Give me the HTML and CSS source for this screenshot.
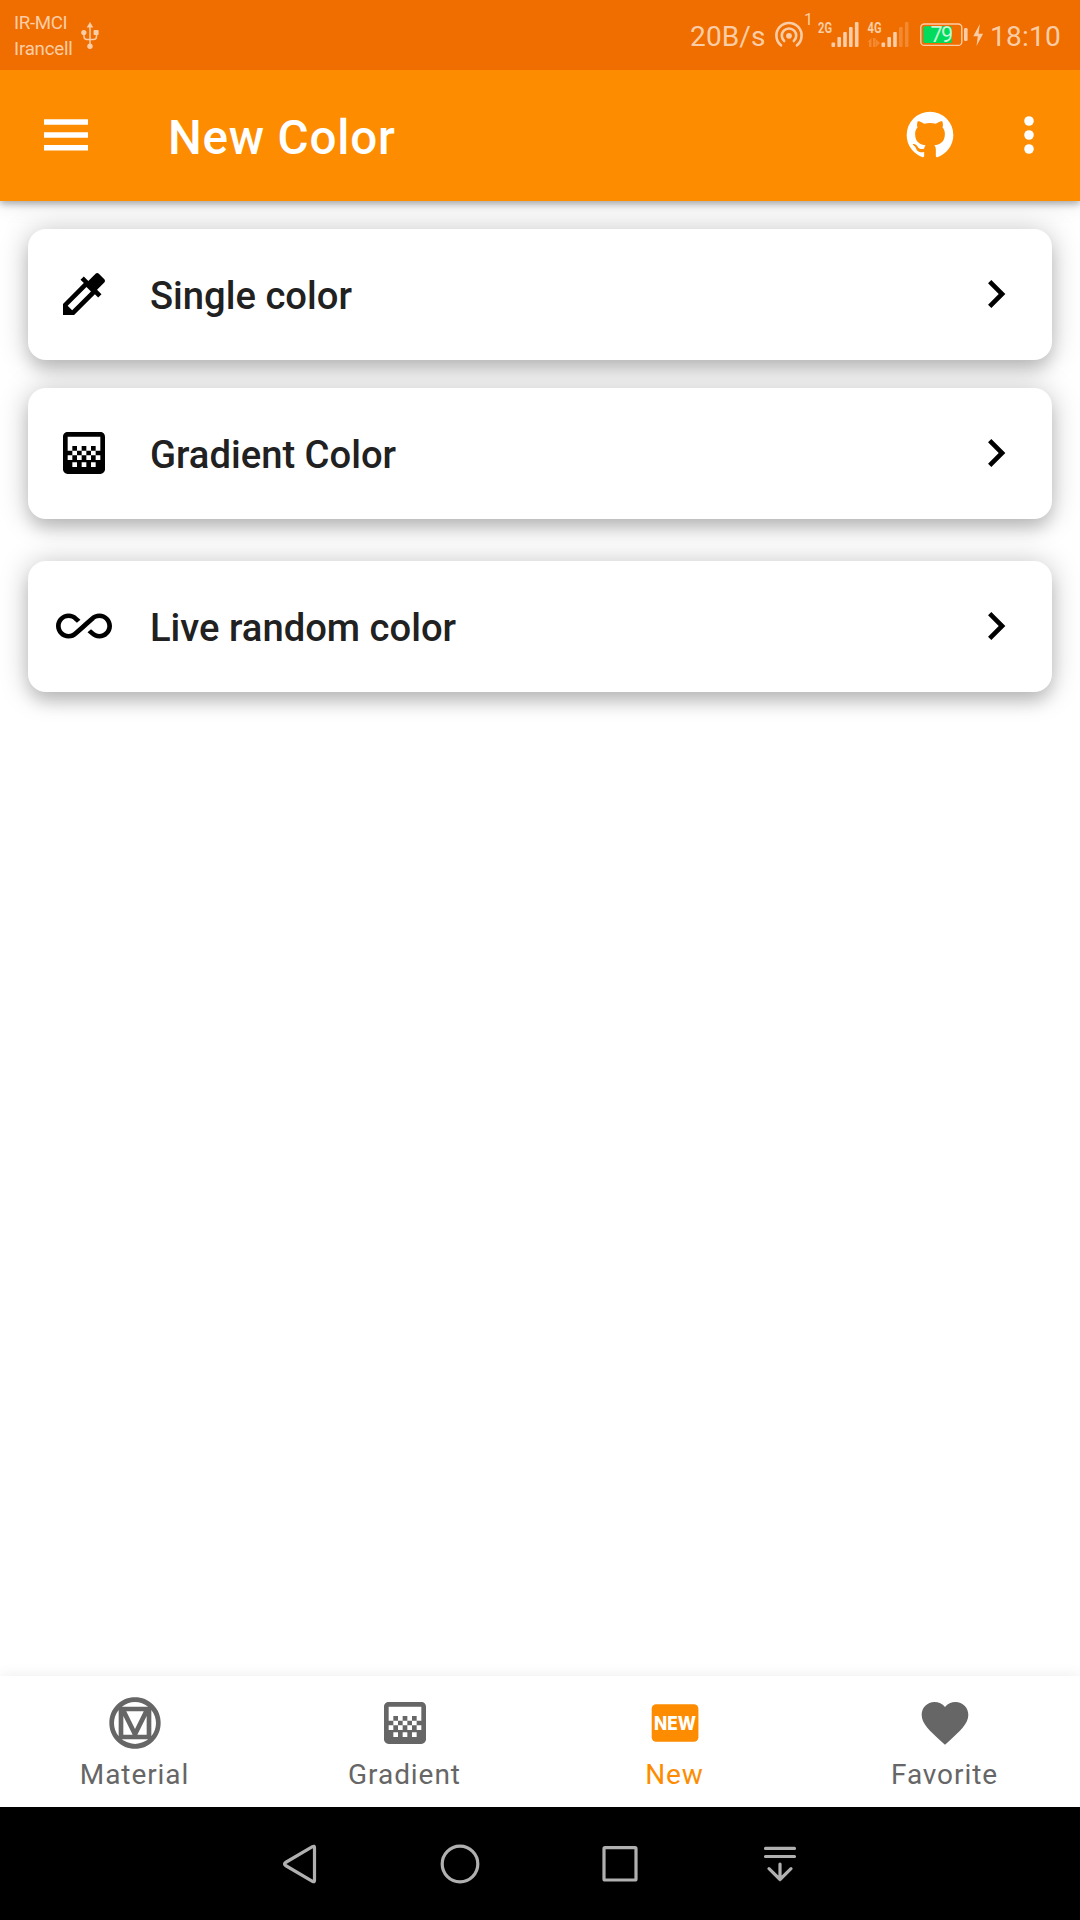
FILE: index.html
```html
<!DOCTYPE html>
<html lang="en">
<head>
<meta charset="utf-8">
<title>New Color</title>
<link rel="stylesheet" href="styles.css">
</head>
<body>
<div class="screen">
  <div class="status-bar">
    <div class="carriers"><span class="carrier-one">IR-MCI</span><span class="carrier-two">Irancell</span></div>
    <svg class="usb" width="18" height="28" viewBox="0 0 18 28" fill="none" stroke="currentColor" stroke-width="1.5">
      <path d="M9 5v18M3 11v3.500q0 3 3 3h6.500q3 0 3-3V11"/>
      <g fill="currentColor" stroke="none"><path d="M9 0l3.300 5.500H5.700z"/><circle cx="9" cy="24.200" r="2.700"/><circle cx="2.800" cy="10.500" r="2.600"/><rect x="12.600" y="8" width="5" height="5" rx=".8"/></g>
    </svg>
    <span class="speed">20B/s</span>
    <svg width="42" height="70" viewBox="774 0 42 70">
      <g fill="none" stroke="currentColor" stroke-width="2.600" stroke-linecap="round">
        <path d="M781 45.300A12.600 12.600 0 1 1 797 45.300"/><path d="M784.200 41A7.200 7.200 0 1 1 793.800 41"/>
      </g>
      <circle cx="789" cy="35.800" r="2.900" fill="currentColor"/>
      <text class="badge-digit" x="804" y="25">1</text>
    </svg>
    <svg width="50" height="70" viewBox="816 0 50 70" fill="currentColor">
      <text class="net" x="818" y="33" textLength="14" lengthAdjust="spacingAndGlyphs">2G</text>
      <rect x="831.500" y="42.500" width="3.600" height="4.500" rx="1"/><rect x="837.400" y="37" width="3.600" height="10" rx="1"/><rect x="843.200" y="32" width="3.600" height="15" rx="1"/><rect x="849" y="27" width="3.600" height="20" rx="1"/><rect x="854.900" y="22" width="3.600" height="25" rx="1"/>
    </svg>
    <svg width="50" height="70" viewBox="866 0 50 70" fill="currentColor">
      <text class="net" x="867.500" y="33" textLength="14" lengthAdjust="spacingAndGlyphs">4G</text>
      <rect x="881.500" y="42.500" width="3.600" height="4.500" rx="1"/><rect x="887.400" y="37" width="3.600" height="10" rx="1"/><rect x="893.200" y="32" width="3.600" height="15" rx="1"/>
      <g opacity=".3"><rect x="899" y="27" width="3.600" height="20" rx="1"/><rect x="904.900" y="22" width="3.600" height="25" rx="1"/><path d="M867.500 42l4-4v9h-2.500v-5zM873 38h2.600v9H873zM876 39.500v7.500l4-4z"/></g>
    </svg>
    <svg width="54" height="70" viewBox="916 0 54 70">
      <rect x="920.800" y="24" width="41" height="21.400" rx="3.500" fill="none" stroke="currentColor" stroke-width="1.400"/>
      <rect class="charge" x="923.300" y="26.300" width="28.500" height="16.800" rx="1.500"/>
      <rect x="964" y="28" width="3.600" height="13" rx="1.200" fill="currentColor"/>
      <text class="level" x="930.500" y="42" textLength="22.500">79</text>
    </svg>
    <svg width="20" height="70" viewBox="970 0 20 70" fill="currentColor"><path d="M979.800 24L973.300 36.200h4.500L976.500 46l6.600-12.300h-4.600z"/></svg>
    <span class="clock">18:10</span>
  </div>

  <header class="app-bar">
    <svg class="menu" width="44" height="32" viewBox="0 0 44 32" fill="#fff"><path d="M0 .3h44v5.400H0zM0 13.300h44v5.400H0zM0 26.100h44v5.400H0z"/></svg>
    <h1 class="title">New Color</h1>
    <svg class="github" width="56" height="56" viewBox="0 0 24 24" fill="#fff"><path d="M12,2A10,10 0 0,0 2,12C2,16.42 4.87,20.17 8.84,21.5C9.34,21.58 9.5,21.27 9.5,21C9.5,20.77 9.5,20.14 9.5,19.31C6.73,19.91 6.14,17.97 6.14,17.97C5.68,16.81 5.03,16.5 5.03,16.5C4.12,15.88 5.1,15.9 5.1,15.9C6.1,15.97 6.63,16.93 6.63,16.93C7.5,18.45 8.97,18 9.54,17.76C9.63,17.11 9.89,16.67 10.17,16.42C7.95,16.17 5.62,15.31 5.62,11.5C5.62,10.39 6,9.5 6.65,8.79C6.55,8.54 6.2,7.5 6.75,6.15C6.75,6.15 7.59,5.88 9.5,7.17C10.29,6.95 11.15,6.84 12,6.84C12.85,6.84 13.71,6.95 14.5,7.17C16.41,5.88 17.25,6.15 17.25,6.15C17.8,7.5 17.45,8.54 17.35,8.79C18,9.5 18.38,10.39 18.38,11.5C18.38,15.32 16.04,16.16 13.81,16.41C14.17,16.72 14.5,17.33 14.5,18.26C14.5,19.6 14.5,20.68 14.5,21C14.5,21.27 14.66,21.59 15.17,21.5C19.14,20.16 22,16.42 22,12A10,10 0 0,0 12,2Z"/></svg>
    <svg class="more" width="56" height="56" viewBox="0 0 24 24" fill="#fff"><circle cx="12" cy="6" r="2.050"/><circle cx="12" cy="12" r="2.050"/><circle cx="12" cy="18" r="2.050"/></svg>
  </header>

  <main class="content">
    <div class="card">
      <svg width="56" height="56" viewBox="0 0 24 24"><path d="M20.71 5.63l-2.34-2.34c-.39-.39-1.02-.39-1.41 0l-3.12 3.12-1.93-1.91-1.41 1.41 1.42 1.42L3 16.25V21h4.75l8.92-8.92 1.42 1.42 1.41-1.41-1.92-1.92 3.12-3.12c.4-.4.4-1.03.01-1.42zM6.92 19L5 17.080l8.060-8.060 1.920 1.920L6.920 19z"/></svg>
      <span class="card-label">Single color</span>
      <svg width="56" height="56" viewBox="0 0 24 24"><path d="M10 6L8.590 7.410 13.170 12l-4.580 4.590L10 18l6-6z"/></svg>
    </div>
    <div class="card">
      <svg width="56" height="56" viewBox="0 0 24 24"><path d="M11 9h2v2h-2zm-2 2h2v2H9zm4 0h2v2h-2zm2-2h2v2h-2zM7 9h2v2H7zm12-6H5c-1.100 0-2 .9-2 2v14c0 1.100.9 2 2 2h14c1.100 0 2-.9 2-2V5c0-1.100-.9-2-2-2zM9 18H7v-2h2v2zm4 0h-2v-2h2v2zm4 0h-2v-2h2v2zm2-7h-2v2h2v2h-2v-2h-2v2h-2v-2h-2v2H9v-2H7v2H5v-2h2v-2H5V5h14v6z"/></svg>
      <span class="card-label">Gradient Color</span>
      <svg width="56" height="56" viewBox="0 0 24 24"><path d="M10 6L8.590 7.410 13.170 12l-4.580 4.590L10 18l6-6z"/></svg>
    </div>
    <div class="card card-live">
      <svg width="56" height="56" viewBox="0 0 24 24"><path d="M18.600 6.620c-1.440 0-2.800.56-3.770 1.530L12 10.660 10.480 12h.01L7.800 14.390c-.64.64-1.490.99-2.400.99-1.870 0-3.390-1.510-3.390-3.380S3.530 8.620 5.400 8.620c.91 0 1.760.35 2.440 1.030l1.130 1 1.510-1.340L9.220 8.200C8.200 7.180 6.840 6.620 5.400 6.620 2.420 6.620 0 9.040 0 12s2.420 5.380 5.400 5.380c1.440 0 2.800-.56 3.770-1.530l2.830-2.500.01.01L13.520 12h-.01l2.690-2.390c.64-.64 1.490-.99 2.400-.99 1.870 0 3.390 1.510 3.390 3.380s-1.520 3.380-3.390 3.380c-.9 0-1.760-.35-2.440-1.030l-1.140-1.010-1.510 1.340 1.270 1.120c1.020 1.010 2.370 1.570 3.820 1.570 2.980 0 5.400-2.410 5.400-5.380s-2.420-5.370-5.400-5.370z"/></svg>
      <span class="card-label">Live random color</span>
      <svg width="56" height="56" viewBox="0 0 24 24"><path d="M10 6L8.590 7.410 13.170 12l-4.580 4.590L10 18l6-6z"/></svg>
    </div>
  </main>

  <nav class="tabs">
    <div class="tab">
      <svg width="56" height="56" viewBox="0 0 24 24" fill="currentColor"><path d="M21,12C21,9.97 20.33,8.09 19,6.38V17.63C20.33,15.97 21,14.09 21,12M17.63,19H6.38C7.06,19.55 7.95,20 9.05,20.41C10.14,20.8 11.13,21 12,21C12.88,21 13.86,20.8 14.95,20.41C16.05,20 16.94,19.55 17.63,19M11,17L7,9V17H11M17,9L13,17H17V9M12,14.53L15.75,7H8.25L12,14.53M17.63,5C15.97,3.67 14.09,3 12,3C9.91,3 8.03,3.67 6.38,5H17.63M5,17.63V6.38C3.67,8.09 3,9.97 3,12C3,14.09 3.67,15.97 5,17.63M23,12C23,15.03 21.94,17.63 19.78,19.78C17.63,21.94 15.03,23 12,23C8.97,23 6.38,21.94 4.22,19.78C2.06,17.63 1,15.03 1,12C1,8.97 2.06,6.38 4.22,4.22C6.38,2.06 8.97,1 12,1C15.03,1 17.63,2.06 19.78,4.22C21.94,6.38 23,8.97 23,12Z"/></svg>
      <span class="tab-label">Material</span>
    </div>
    <div class="tab">
      <svg width="56" height="56" viewBox="0 0 24 24" fill="currentColor"><path d="M11 9h2v2h-2zm-2 2h2v2H9zm4 0h2v2h-2zm2-2h2v2h-2zM7 9h2v2H7zm12-6H5c-1.100 0-2 .9-2 2v14c0 1.100.9 2 2 2h14c1.100 0 2-.9 2-2V5c0-1.100-.9-2-2-2zM9 18H7v-2h2v2zm4 0h-2v-2h2v2zm4 0h-2v-2h2v2zm2-7h-2v2h2v2h-2v-2h-2v2h-2v-2h-2v2H9v-2H7v2H5v-2h2v-2H5V5h14v6z"/></svg>
      <span class="tab-label">Gradient</span>
    </div>
    <div class="tab tab-active">
      <svg width="56" height="56" viewBox="0 0 56 56"><rect x="4.700" y="9.300" width="46.700" height="37.400" rx="4.500" fill="currentColor"/><text class="new-mark" x="7" y="35" textLength="42" lengthAdjust="spacingAndGlyphs">NEW</text></svg>
      <span class="tab-label">New</span>
    </div>
    <div class="tab">
      <svg width="56" height="56" viewBox="0 0 24 24" fill="currentColor"><path d="M12 21.350l-1.450-1.320C5.400 15.360 2 12.280 2 8.500 2 5.420 4.420 3 7.500 3c1.740 0 3.410.81 4.500 2.090C13.090 3.810 14.760 3 16.500 3 19.580 3 22 5.420 22 8.500c0 3.780-3.400 6.860-8.550 11.540L12 21.350z"/></svg>
      <span class="tab-label">Favorite</span>
    </div>
  </nav>

  <div class="system-nav">
    <svg width="160" height="50" viewBox="-80 -25 160 50"><path d="M14.500 -16.500V16.500Q14.500 18.500 12.500 17.300L-14.500 1.500Q-16.500 0 -14.500 -1.500L12.500 -17.300Q14.500 -18.500 14.500 -16.500z"/></svg>
    <svg width="160" height="50" viewBox="-80 -25 160 50"><circle r="17.800"/></svg>
    <svg width="160" height="50" viewBox="-80 -25 160 50"><rect x="-16" y="-16.300" width="32" height="32.300" rx="1"/></svg>
    <svg width="160" height="50" viewBox="-80 -25 160 50"><path d="M-14.500 -15.600h29M-14.500 -7.500h29M0 0v15.500M-11 4.700L0 15.500 11 4.700"/></svg>
  </div>
</div>
</body>
</html>
```
FILE: styles.css
```css
* { box-sizing: border-box; }

body {
  margin: 0;
  font-family: Roboto, sans-serif;
  background: #fff;
}

svg { display: block; flex: none; }

.screen {
  display: flex;
  flex-direction: column;
  width: 1080px;
  height: 1920px;
  overflow: hidden;
}

/* Status bar */
.status-bar {
  z-index: 1;
  display: flex;
  align-items: center;
  height: 70px;
  padding: 0 18px 0 14px;
  background: #f06d00;
  color: #fbcda6;
}

.carriers {
  display: flex;
  flex-direction: column;
  width: 67px;
  padding-top: 2px;
  font-size: 18.7px;
  line-height: 26px;
  white-space: nowrap;
}

.carrier-one { letter-spacing: -0.35px; }
.carrier-two { letter-spacing: -0.2px; }

.usb { margin-top: 1px; }

.speed {
  width: 84px;
  margin-left: auto;
  padding-top: 2px;
  font-size: 28px;
  letter-spacing: 0.15px;
}

.clock {
  width: 72px;
  padding-top: 2px;
  font-size: 28px;
  letter-spacing: 0.25px;
}

.badge-digit { font-size: 16px; fill: currentColor; }
.net { font-size: 15.5px; font-weight: 700; }
.charge { fill: #00db5b; }
.level { font-size: 21.5px; fill: #c8f5d3; }

/* App bar */
.app-bar {
  display: flex;
  align-items: center;
  height: 131px;
  padding: 0 23px 1px 44px;
  background: #fd8c00;
  color: #fff;
  box-shadow: 0 3px 7px rgba(0, 0, 0, 0.3), 0 0 24px rgba(0, 0, 0, 0.12);
}

.title {
  flex: 1;
  margin: 0 0 0 80px;
  padding-top: 5px;
  font-size: 47.6px;
  font-weight: 500;
  line-height: 56px;
  letter-spacing: 0.8px;
}

.more { margin-left: 43px; }

/* Option cards */
.content {
  display: flex;
  flex: 1;
  flex-direction: column;
  gap: 28px;
  padding: 28px;
}

.card {
  display: flex;
  align-items: center;
  height: 131px;
  padding: 0 28px 1px;
  border-radius: 18px;
  background: #fff;
  box-shadow: 0 12px 16px -2px rgba(0, 0, 0, 0.14), 0 2px 28px rgba(0, 0, 0, 0.25);
}

.card-live { margin-top: 14px; }

.card-label {
  flex: 1;
  margin-left: 38px;
  padding-top: 3px;
  font-size: 38.2px;
  font-weight: 500;
  color: #212121;
}

/* Bottom tabs */
.tabs {
  display: grid;
  grid-template-columns: repeat(4, 1fr);
  height: 131px;
  background: #fff;
  box-shadow: 0 0 14px rgba(0, 0, 0, 0.08);
}

.tab {
  display: flex;
  flex-direction: column;
  align-items: center;
  padding-top: 19px;
  color: #666;
}

.tab-active { color: #fd8c00; }

.tab-label {
  margin: 7px 1px 0 0;
  font-size: 28px;
  line-height: 33px;
  letter-spacing: 0.93px;
}

.new-mark { font-family: Inter, sans-serif; font-size: 19.4px; font-weight: 800; fill: #fff; }

/* System navigation */
.system-nav {
  display: flex;
  align-items: center;
  justify-content: center;
  height: 113px;
  background: #000;
}

.system-nav svg {
  fill: none;
  stroke: #b0b0b0;
  stroke-width: 3.2px;
  stroke-linecap: round;
  stroke-linejoin: round;
}
```
